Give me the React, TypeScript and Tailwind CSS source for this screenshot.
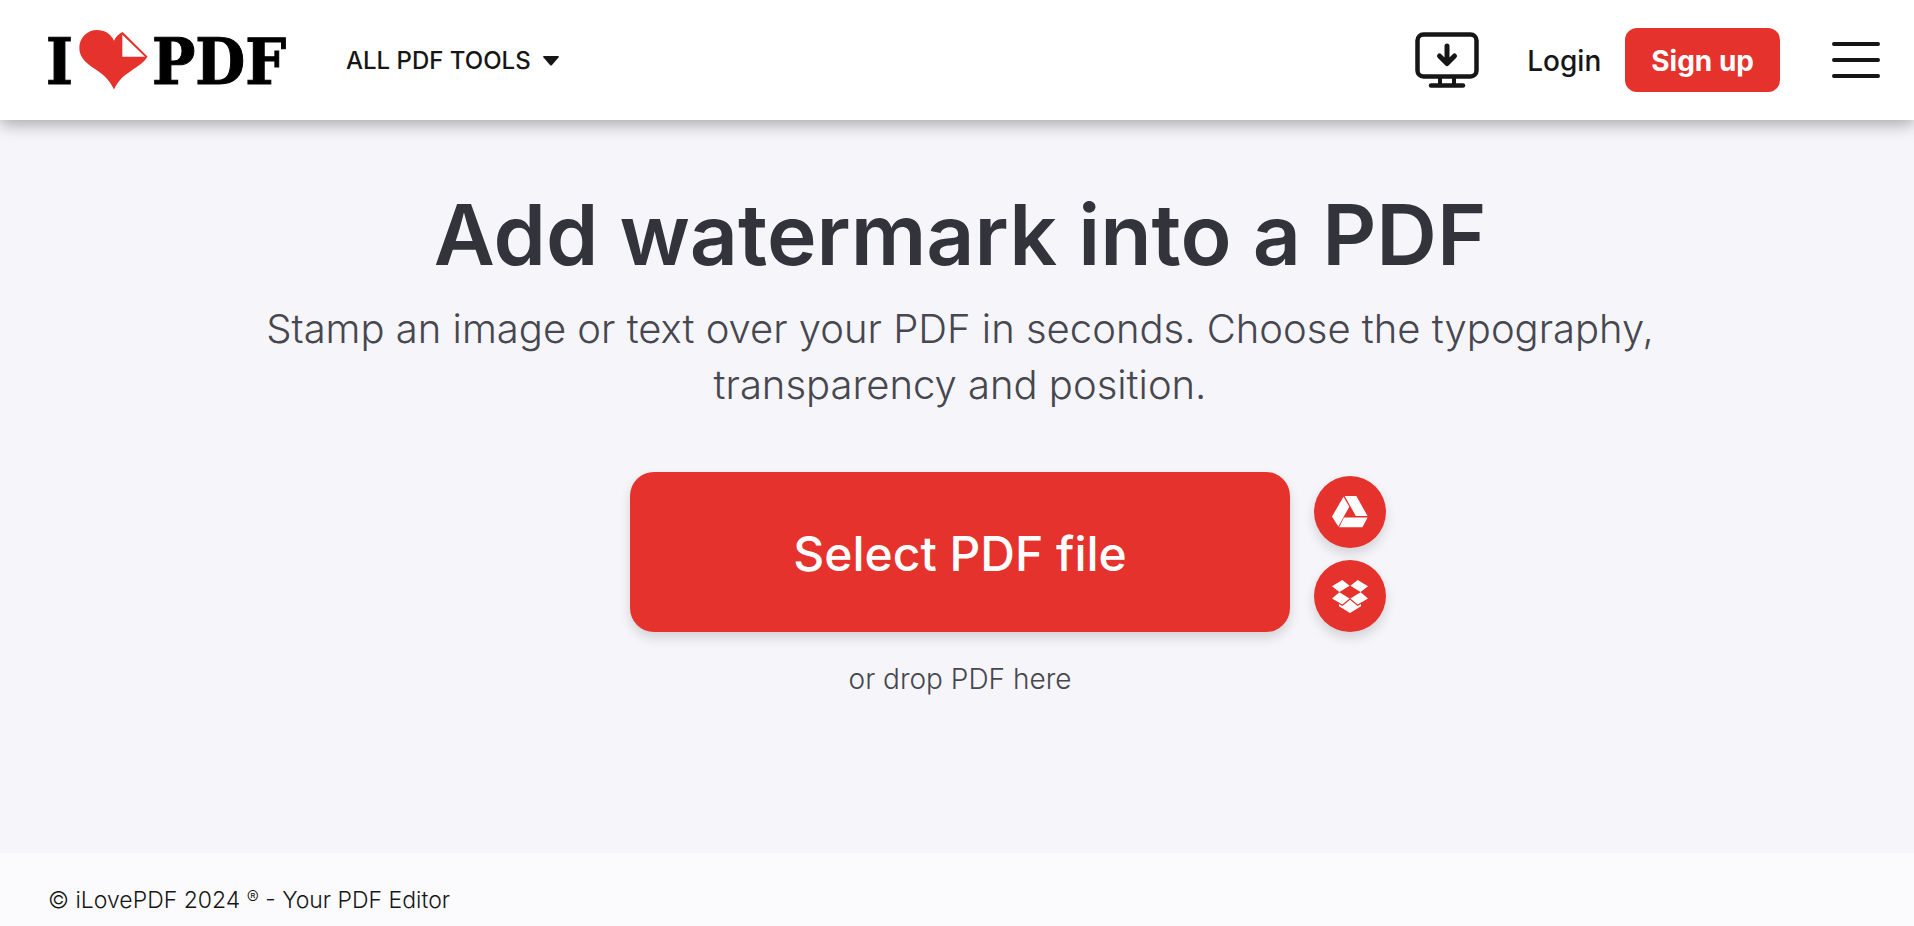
const cloudButtons = [
  { id: "drive", label: "Select from Google Drive", icon: <DriveIcon /> },
  { id: "dropbox", label: "Select from Dropbox", icon: <DropboxIcon /> },
];

function Logo() {
  return (
    <svg
      viewBox="-4 -10 248 80"
      className="h-20 w-[248px] font-['DejaVu_Serif_Condensed','DejaVu_Serif',serif] text-[64px] font-bold"
      role="img"
      aria-label="iLovePDF"
    >
      <text x="-2" y="54" stroke="#000" strokeWidth="1">
        I
      </text>
      <path
        fill="#e5322d"
        d="M66 59.5C62 51 57 46 50 41C41 35 31.3 29 31.3 18C31.3 7.5 39.5 0 49 0C56.5 0 63 4 66 10.7C67.6 7 71 3.6 74.7 2L99.5 26.6C96 33 90 36 83 41C75 46 70 51 66 59.5Z"
      />
      <path fill="#fff" d="M74.3 4.7V26.7H97Z" />
      <text x="104" y="54" stroke="#000" strokeWidth="1">
        PDF
      </text>
    </svg>
  );
}

function DesktopIcon() {
  return (
    <svg viewBox="0 0 64 56" className="h-14 w-16" fill="none" stroke="#161616" strokeWidth="4.5" aria-hidden="true">
      <rect x="2.5" y="2.5" width="59" height="42" rx="6" />
      <path d="M25 44v8M39 44v8" strokeWidth="4" />
      <path d="M16 53.5h32" strokeLinecap="round" />
      <path d="M32 14v17M24.5 24l7.5 7.5 7.5-7.5" strokeWidth="5" strokeLinecap="round" strokeLinejoin="round" />
    </svg>
  );
}

function DriveIcon() {
  return (
    <svg viewBox="0 0 36 32" className="h-8 w-9" fill="#fff" aria-hidden="true">
      <path d="M11.5 0.8L17.3 10.8L6.3 30.5L0 20.5Z" />
      <path d="M12.7 0H24.3L35.6 20H23.8Z" />
      <path d="M12 21.4H35.6L30.4 31.2H7.2Z" />
    </svg>
  );
}

function DropboxIcon() {
  return (
    <svg viewBox="0 0 36 33" className="h-[33px] w-9" fill="#fff" aria-hidden="true">
      <path d="M10.3 0L17.6 5.7L7.4 12L0 6.3Z" />
      <path d="M25.7 0L18.4 5.7L28.6 12L36 6.3Z" />
      <path d="M7.4 12.2L17.6 18.5L10.3 24.4L0 18.4Z" />
      <path d="M28.6 12.2L18.4 18.5L25.7 24.4L36 18.4Z" />
      <path d="M18 19.7L10.5 26L7 24V26.2L18 33L29 26.2V24L25.5 26Z" />
    </svg>
  );
}

function Header() {
  return (
    <header className="relative z-10 flex h-[120px] items-center justify-between bg-white pl-11 pr-[34px] text-[#161616] shadow-[0_4px_16px_rgba(0,0,0,0.33)]">
      <div className="flex items-center">
        <a href="#">
          <Logo />
        </a>
        <button className="ml-[54px] flex items-center gap-3 pt-0.5 text-2xl font-medium">
          ALL PDF TOOLS
          <svg viewBox="0 0 16 10" className="h-2.5 w-4" aria-hidden="true">
            <path d="M1 0H15Q16.5 0 15.5 1.5L9 9Q8 10 7 9L0.5 1.5Q-0.5 0 1 0Z" fill="#161616" />
          </svg>
        </button>
      </div>
      <div className="flex items-center">
        <a href="#" aria-label="Desktop app">
          <DesktopIcon />
        </a>
        <a href="#" className="ml-12 pt-0.5 text-[28px] font-medium">
          Login
        </a>
        <a
          href="#"
          className="ml-6 flex h-16 items-center rounded-xl bg-[#e5322d] px-[26px] pt-0.5 text-[28px] font-bold text-white"
        >
          Sign up
        </a>
        <button className="ml-[52px]" aria-label="Menu">
          <svg viewBox="0 0 48 36" className="h-9 w-12" stroke="#161616" strokeWidth="4" strokeLinecap="round">
            <path d="M2 2h44M2 18h44M2 34h44" />
          </svg>
        </button>
      </div>
    </header>
  );
}

function App() {
  return (
    <div className="flex min-h-screen flex-col bg-[#f5f5fa] font-['Inter',sans-serif]">
      <Header />

      <main className="flex flex-1 flex-col items-center pl-1.5 pt-[67px] text-center">
        <h1 className="text-[84px] font-semibold leading-24 text-[#33333b]">Add watermark into a PDF</h1>
        <p className="mt-[18px] max-w-[1440px] text-[40px] font-light leading-14 text-[#47474f]">
          Stamp an image or text over your PDF in seconds. Choose the typography, transparency and position.
        </p>

        {/* Uploader */}
        <div className="mt-[59px] grid grid-cols-[1fr_660px_1fr] items-end gap-6">
          <div />
          <button className="h-40 rounded-3xl bg-[#e5322d] pt-1 text-5xl font-medium text-white shadow-[0_6px_12px_rgba(0,0,0,0.14)]">
            Select PDF file
          </button>
          <div className="flex flex-col gap-3">
            {cloudButtons.map((btn) => (
              <button
                key={btn.id}
                aria-label={btn.label}
                className="flex h-[72px] w-[72px] items-center justify-center rounded-full bg-[#e5322d] shadow-[0_6px_12px_rgba(0,0,0,0.14)]"
              >
                {btn.icon}
              </button>
            ))}
          </div>
        </div>
        <p className="mt-[27px] text-[28px] font-light leading-10 text-[#47474f]">or drop PDF here</p>
      </main>

      <footer className="bg-[#fbfbfd] px-12 pb-2 pt-[29px] text-[23px] leading-9 font-light text-[#161616]">
        © iLovePDF 2024 <span className="align-[4px] text-lg leading-none">®</span> - Your PDF Editor
      </footer>
    </div>
  );
}

export default App;
